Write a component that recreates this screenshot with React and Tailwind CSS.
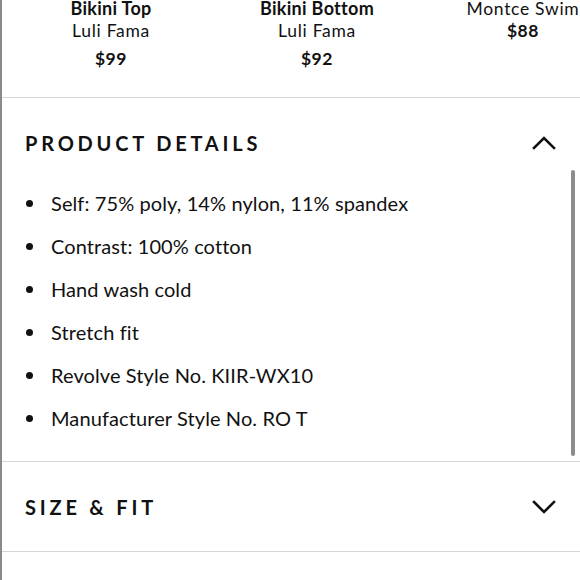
import React from 'react';

const products = [
  { name: 'Bikini Top', brand: 'Luli Fama', price: '$99' },
  { name: 'Bikini Bottom', brand: 'Luli Fama', price: '$92' },
];

const details = [
  'Self: 75% poly, 14% nylon, 11% spandex',
  'Contrast: 100% cotton',
  'Hand wash cold',
  'Stretch fit',
  'Revolve Style No. KIIR-WX10',
  'Manufacturer Style No. RO T',
];

const Chevron = ({ up }) => (
  <svg width="24" height="14" viewBox="0 0 24 14" fill="none">
    <path
      d={up ? 'M2 12 L12 2 L22 12' : 'M2 2 L12 12 L22 2'}
      stroke="#111"
      strokeWidth="2.6"
      strokeLinecap="square"
    />
  </svg>
);

const App = () => {
  return (
    <div className="relative w-[580px] h-[580px] overflow-hidden bg-white border-l-2 border-[#8a8a8a] font-['Lato',sans-serif] text-[#111]">
      {/* products carousel */}
      <div className="flex h-[98px] pl-[6px] border-b border-[#d6d6d6]">
        {products.map((p, i) => (
          <div key={i} className="w-[206px] shrink-0 flex flex-col items-center">
            <div className="text-[18px] font-bold leading-[23px] -mt-[3px] tracking-[0.3px]">{p.name}</div>
            <div className="text-[17.5px] leading-[24px] -mt-[1px] tracking-[0.7px]">{p.brand}</div>
            <div className="text-[17.5px] font-bold leading-[24px] mt-[4px] tracking-[0.6px]">{p.price}</div>
          </div>
        ))}
        <div className="w-[206px] shrink-0 flex flex-col items-center">
          <div className="text-[17.5px] leading-[23px] -mt-[3px] tracking-[0.7px]">Montce Swim</div>
          <div className="text-[17.5px] font-bold leading-[24px] -mt-[1px] tracking-[0.6px]">$88</div>
        </div>
      </div>

      {/* product details */}
      <div className="border-b border-[#d6d6d6]">
        <div className="flex items-center justify-between h-[90px] pl-[23px] pr-[24px]">
          <span className="text-[20px] font-bold tracking-[3.8px]">PRODUCT DETAILS</span>
          <Chevron up />
        </div>
        <ul className="pl-[23px] pb-[22px] -mt-[7px]">
          {details.map((d) => (
            <li key={d} className="flex items-center h-[43px] text-[20px] tracking-[0.1px]">
              <span className="w-[7px] h-[7px] rounded-full bg-[#111] ml-[1px] mr-[18px] mt-[2px]" />
              {d}
            </li>
          ))}
        </ul>
      </div>

      {/* size & fit */}
      <div className="flex items-center justify-between h-[90px] pl-[23px] pr-[24px] border-b border-[#d6d6d6]">
        <span className="text-[20px] font-bold tracking-[3.8px]">SIZE &amp; FIT</span>
        <Chevron />
      </div>

      {/* scrollbar */}
      <div className="absolute left-[569px] top-[170px] w-[4px] h-[286px] rounded-full bg-[#8c8c8c]" />
    </div>
  );
};

export default App;
